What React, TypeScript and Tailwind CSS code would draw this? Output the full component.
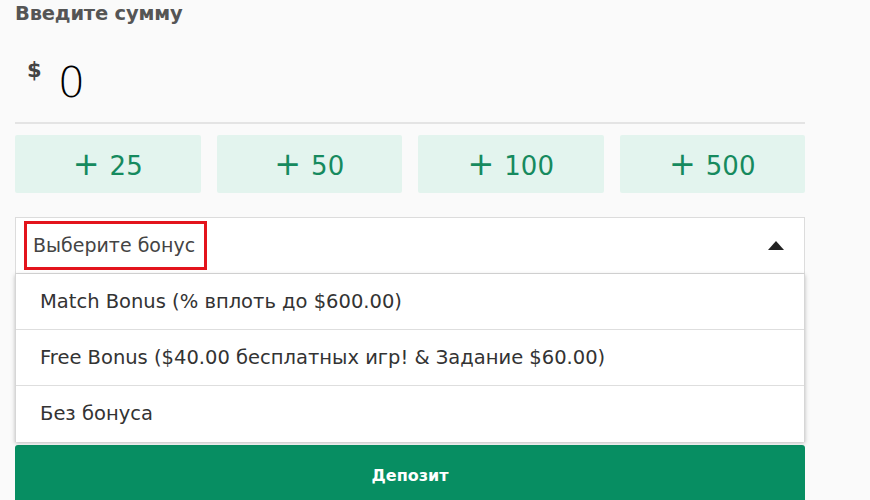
import React, { useState } from 'react';

const amounts = [25, 50, 100, 500];

const bonuses = [
  'Match Bonus (% вплоть до $600.00)',
  'Free Bonus ($40.00 бесплатных игр! & Задание $60.00)',
  'Без бонуса',
];

export default function App() {
  const [amount, setAmount] = useState(0);
  const [open, setOpen] = useState(true);

  return (
    <div className="w-[870px] h-[500px] overflow-hidden bg-[#fafafa] font-['DejaVu_Sans',sans-serif]">
      <div className="w-[790px] ml-[15px]">
        <div className="pt-[2px] h-[30px] text-[19.5px] font-bold text-[#555] leading-[24px] tracking-[-0.2px]">Введите сумму</div>

        <div className="flex items-start h-[94px] border-b-2 border-[#e4e4e4]">
          <span className="ml-[12px] mt-[30px] text-[21px] font-bold text-[#444] leading-none">$</span>
          <span className="ml-[16px] mt-[31px] text-[43px] font-extralight text-black leading-none">{amount}</span>
        </div>

        <div className="grid grid-cols-4 gap-4 mt-[11px]">
          {amounts.map((a) => (
            <button
              key={a}
              onClick={() => setAmount(amount + a)}
              className="h-[58px] bg-[#e3f4ee] rounded-[2px] text-[#168a5e] text-[26px] flex items-center justify-center gap-[10px] pt-[4px]"
            >
              <span className="text-[32px] leading-none -mt-[4px]">+</span>
              <span>{a}</span>
            </button>
          ))}
        </div>

        <div className="mt-[24px] relative">
          <div
            onClick={() => setOpen(!open)}
            className="h-[57px] bg-white border border-[#dcdcdc] flex items-center justify-between pl-[8px] pr-[20px] cursor-pointer"
          >
            <div className="h-[49px] border-[3px] border-[#e3141c] flex items-center pl-[6px] pr-[9px] text-[19px] text-[#444]">
              Выберите бонус
            </div>
            <svg width="16" height="9" viewBox="0 0 16 9">
              <path d="M8 0 L16 9 L0 9 Z" fill={open ? '#222' : 'none'} />
            </svg>
          </div>

          {open && (
            <div className="bg-white shadow-[0_1px_4px_rgba(0,0,0,0.25)] border-x border-[#d6d6d6]">
              {bonuses.map((b, i) => (
                <div
                  key={b}
                  className={`h-[56px] flex items-center pl-[24px] text-[19.5px] text-[#333] ${i < bonuses.length - 1 ? 'border-b border-[#dedede]' : ''}`}
                >
                  {b}
                </div>
              ))}
            </div>
          )}
        </div>

        <button className="mt-[3px] w-full h-[60px] bg-[#078e62] rounded-t-[3px] text-white text-[16px] font-bold flex items-center justify-center pt-[2px]">
          Депозит
        </button>
      </div>
    </div>
  );
}
